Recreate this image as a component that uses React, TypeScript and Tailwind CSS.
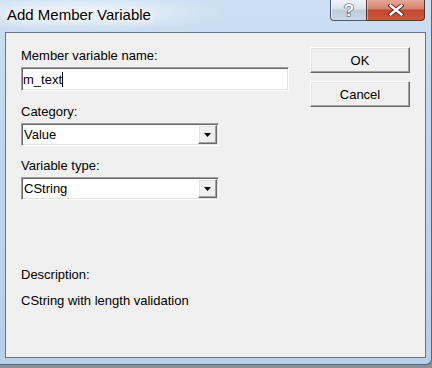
const raised =
  "bg-[#f0f0f0] border border-t-white border-l-white border-r-[#696969] border-b-[#696969] shadow-[inset_-1px_-1px_0_#a0a0a0,inset_1px_1px_0_#e3e3e3]";
const sunken =
  "bg-white border border-t-[#a0a0a0] border-l-[#a0a0a0] border-r-white border-b-white shadow-[inset_1px_1px_0_#696969,inset_-1px_-1px_0_#e3e3e3]";

const Label = ({ children, className = "" }: { children: React.ReactNode; className?: string }) => (
  <div className={`text-[13px] leading-[15px] text-black ${className}`}>{children}</div>
);

const Combo = ({ value, className = "" }: { value: string; className?: string }) => (
  <div className={`w-[198px] h-[23px] flex ${sunken} p-px ${className}`}>
    <div className="flex-1 flex items-center pl-px text-[13px] leading-[15px]">{value}</div>
    <div className={`w-[19px] flex items-center justify-center ${raised}`}>
      <svg width="7" height="4" viewBox="0 0 7 4">
        <path d="M0 0h7L3.5 4z" fill="#000" />
      </svg>
    </div>
  </div>
);

const DialogButton = ({ label, className = "" }: { label: string; className?: string }) => (
  <div
    className={`w-[100px] h-[26px] flex items-center justify-center text-[13px] leading-[15px] ${raised} ${className}`}
  >
    {label}
  </div>
);

export default function App() {
  return (
    <div className="w-[432px] h-[368px] overflow-hidden bg-[#8d8f93] font-['Liberation_Sans',Arial,sans-serif]">
      <div className="h-[365px] flex flex-col rounded-br-[6px] border-b border-r border-[#57667a] bg-[linear-gradient(180deg,#cddff2_0%,#c0d6ed_40%,#b8cfe9_100%)]">
        {/* title bar */}
        <div className="h-[32px] flex items-start relative">
          <div className="absolute left-0 top-0 w-[230px] h-[32px] bg-[radial-gradient(ellipse_at_35%_40%,rgba(255,255,255,0.75),rgba(255,255,255,0)_70%)]" />
          <div className="relative pl-[7px] pt-[6px] text-[15px] leading-[18px] text-black [text-shadow:0_0_6px_#fff,0_0_10px_#fff]">
            Add Member Variable
          </div>
          <div className="relative ml-auto mr-[6px] flex h-[21px]">
            <div className="w-[36px] h-full flex items-center justify-center rounded-bl-[4px] border border-t-0 border-r-0 border-[#4a5a6e] bg-[linear-gradient(180deg,#eef3f8_0%,#d9e2ec_45%,#bdcbda_50%,#cbd7e4_100%)] shadow-[inset_1px_0_0_rgba(255,255,255,0.7)]">
              <svg width="14" height="17" viewBox="0 0 14 17">
                <text
                  x="7"
                  y="14"
                  textAnchor="middle"
                  fontFamily="Liberation Sans, Arial, sans-serif"
                  fontWeight="bold"
                  fontSize="17"
                  fill="#fff"
                  stroke="#3d4b5c"
                  strokeWidth="1.1"
                  paintOrder="stroke"
                >
                  ?
                </text>
              </svg>
            </div>
            <div className="w-[59px] h-full flex items-center justify-center rounded-br-[4px] border border-t-0 border-[#4a3a36] bg-[linear-gradient(180deg,#e6a898_0%,#d8806c_45%,#c3472d_50%,#d2583a_100%)] shadow-[inset_1px_0_0_rgba(255,255,255,0.4)]">
              <svg width="16" height="12" viewBox="0 0 16 12">
                <path d="M2.5 1.5l11 9M13.5 1.5l-11 9" stroke="#4a2a24" strokeWidth="4.2" strokeLinecap="square" />
                <path d="M2.5 1.5l11 9M13.5 1.5l-11 9" stroke="#fff" strokeWidth="2.4" strokeLinecap="square" />
              </svg>
            </div>
          </div>
        </div>

        {/* client area */}
        <div className="ml-[5px] mr-[5px] h-[326px] border border-[#6b7380] bg-[#f0f0f0] flex">
          <div className="flex-1 pl-[15px] pt-[15px] flex flex-col">
            <Label>Member variable name:</Label>
            <div className={`mt-[4px] w-[268px] h-[24px] flex items-center pl-[1px] ${sunken}`}>
              <span className="text-[13px] leading-[15px]">m_text</span>
              <span className="w-px h-[15px] bg-black" />
            </div>

            <Label className="mt-[13px]">Category:</Label>
            <Combo value="Value" className="mt-[4px]" />

            <Label className="mt-[12px]">Variable type:</Label>
            <Combo value="CString" className="mt-[4px]" />

            <Label className="mt-[67px]">Description:</Label>
            <Label className="mt-[11px]">CString with length validation</Label>
          </div>
          <div className="pt-[14px] pr-[15px] flex flex-col gap-[8px]">
            <DialogButton label="OK" />
            <DialogButton label="Cancel" />
          </div>
        </div>
      </div>
    </div>
  );
}
